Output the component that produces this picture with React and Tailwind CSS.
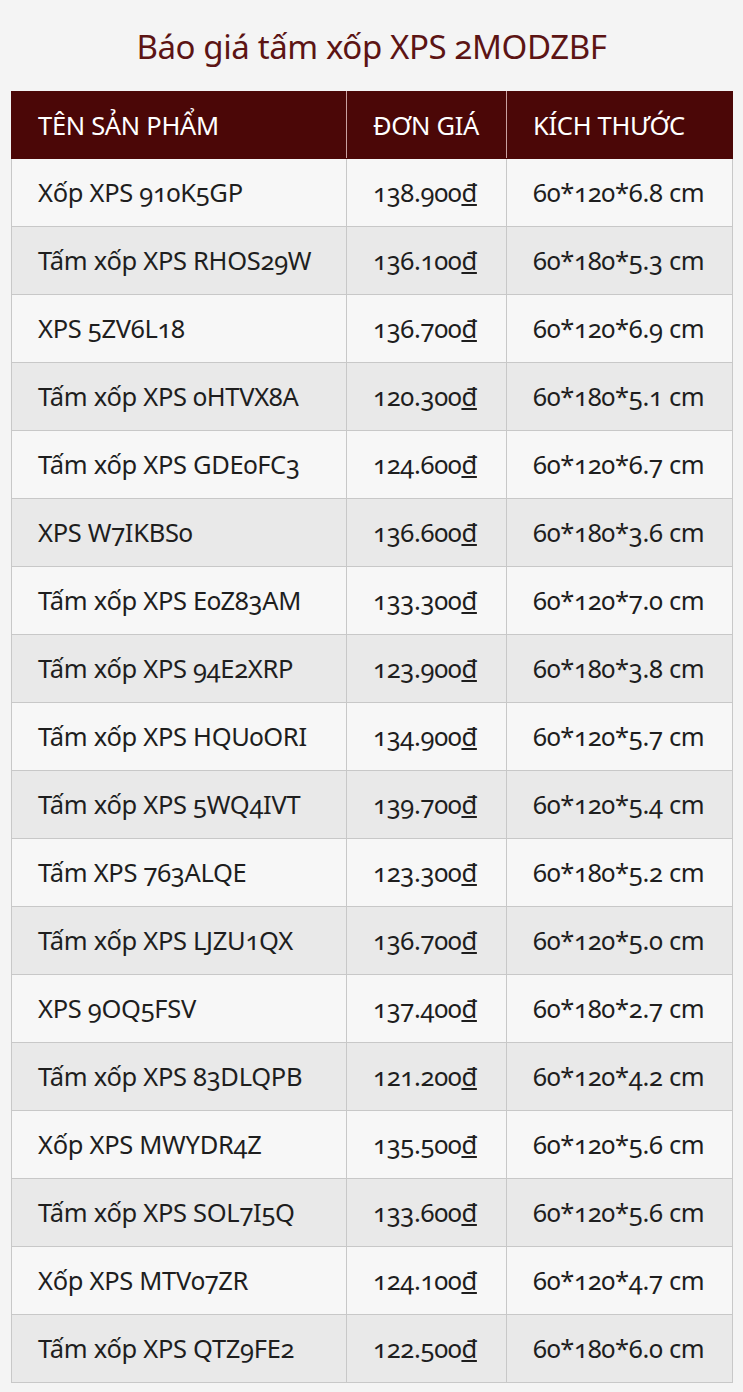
import React from "react";

const rows = [
  ["Xốp XPS 910K5GP", "138.900₫", "60*120*6.8 cm"],
  ["Tấm xốp XPS RHOS29W", "136.100₫", "60*180*5.3 cm"],
  ["XPS 5ZV6L18", "136.700₫", "60*120*6.9 cm"],
  ["Tấm xốp XPS 0HTVX8A", "120.300₫", "60*180*5.1 cm"],
  ["Tấm xốp XPS GDE0FC3", "124.600₫", "60*120*6.7 cm"],
  ["XPS W7IKBS0", "136.600₫", "60*180*3.6 cm"],
  ["Tấm xốp XPS E0Z83AM", "133.300₫", "60*120*7.0 cm"],
  ["Tấm xốp XPS 94E2XRP", "123.900₫", "60*180*3.8 cm"],
  ["Tấm xốp XPS HQU0ORI", "134.900₫", "60*120*5.7 cm"],
  ["Tấm xốp XPS 5WQ4IVT", "139.700₫", "60*120*5.4 cm"],
  ["Tấm XPS 763ALQE", "123.300₫", "60*180*5.2 cm"],
  ["Tấm xốp XPS LJZU1QX", "136.700₫", "60*120*5.0 cm"],
  ["XPS 9OQ5FSV", "137.400₫", "60*180*2.7 cm"],
  ["Tấm xốp XPS 83DLQPB", "121.200₫", "60*120*4.2 cm"],
  ["Xốp XPS MWYDR4Z", "135.500₫", "60*120*5.6 cm"],
  ["Tấm xốp XPS SOL7I5Q", "133.600₫", "60*120*5.6 cm"],
  ["Xốp XPS MTV07ZR", "124.100₫", "60*120*4.7 cm"],
  ["Tấm xốp XPS QTZ9FE2", "122.500₫", "60*180*6.0 cm"],
];

function Price({ value }) {
  const num = value.replace("₫", "");
  return (
    <>
      {num}
      <span className="underline underline-offset-2">đ</span>
    </>
  );
}

export default function App() {
  return (
    <div className="min-h-[1392px] bg-[#f4f4f4] px-[11px] pt-[23px] font-['Noto_Sans',sans-serif] oldstyle-nums">
      <h1 className="text-center text-[33px] leading-[48px] text-[#5c1414] mb-[20px] tracking-[-0.4px]">
        Báo giá tấm xốp XPS 2MODZBF
      </h1>
      <table className="w-[722px] border-collapse text-[25.5px] text-[#1e1e1e] tracking-[-0.3px]">
        <thead>
          <tr className="bg-[#4b0707] text-white h-[67px]">
            <th className="w-[335px] text-left font-normal pl-[26px] border border-[#4b0707] border-r-[#c9a0a0]">
              TÊN SẢN PHẨM
            </th>
            <th className="w-[160px] text-left font-normal pl-[26px] border border-[#4b0707] border-r-[#c9a0a0]">
              ĐƠN GIÁ
            </th>
            <th className="text-left font-normal pl-[26px] border border-[#4b0707]">
              KÍCH THƯỚC
            </th>
          </tr>
        </thead>
        <tbody>
          {rows.map((r, i) => (
            <tr
              key={i}
              className={`h-[68px] ${i % 2 === 0 ? "bg-[#f7f7f7]" : "bg-[#e9e9e9]"}`}
            >
              <td className="pl-[26px] border border-[#c8c8c8]">{r[0]}</td>
              <td className="pl-[26px] border border-[#c8c8c8]">
                <Price value={r[1]} />
              </td>
              <td className="pl-[26px] border border-[#c8c8c8]">{r[2]}</td>
            </tr>
          ))}
        </tbody>
      </table>
    </div>
  );
}
